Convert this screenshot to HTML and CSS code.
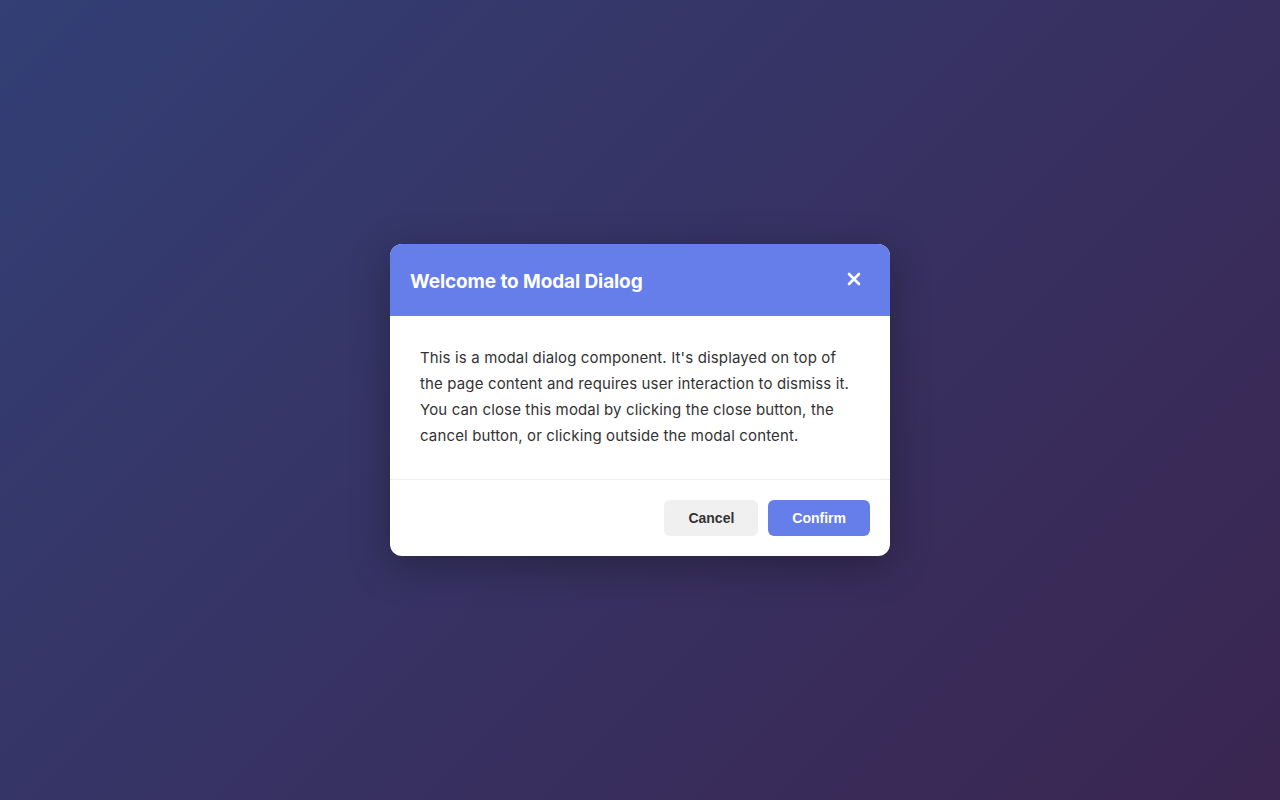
FILE: index.html
```html
<!DOCTYPE html>
<html lang="en">
<head>
<meta charset="utf-8">
<title>Modal Dialog</title>
<link rel="stylesheet" href="styles.css">
</head>
<body>
<div class="overlay">
  <div class="modal" role="dialog" aria-labelledby="modal-title">
    <div class="modal-header">
      <h2 id="modal-title" class="modal-title">Welcome to Modal Dialog</h2>
      <button class="close-btn" aria-label="Close">
        <svg width="14" height="14" viewBox="0 0 14 14" aria-hidden="true"><path d="M2 2 L12 12 M12 2 L2 12" stroke="#fff" stroke-width="2.6" stroke-linecap="round"/></svg>
      </button>
    </div>
    <div class="modal-body">
      <p>This is a modal dialog component. It's displayed on top of the page content and requires user interaction to dismiss it. You can close this modal by clicking the close button, the cancel button, or clicking outside the modal content.</p>
    </div>
    <div class="modal-footer">
      <button class="btn btn-cancel">Cancel</button>
      <button class="btn btn-confirm">Confirm</button>
    </div>
  </div>
</div>
</body>
</html>
```

FILE: styles.css
```css
* { box-sizing: border-box; }
html, body { margin: 0; height: 100%; }
body {
  font-family: Inter, "Noto Sans", "Liberation Sans", sans-serif;
  background: linear-gradient(135deg, #667eea 0%, #764ba2 100%);
}
.overlay {
  height: 100vh;
  display: flex;
  align-items: center;
  justify-content: center;
  background: rgba(0, 0, 0, 0.5);
}
.modal {
  width: 500px;
  background: #fff;
  border-radius: 12px;
  overflow: hidden;
  box-shadow: 0 10px 40px rgba(0, 0, 0, 0.3);
}
.modal-header {
  background: #667eea;
  color: #fff;
  height: 72px;
  padding: 3px 21px 0 20px;
  display: flex;
  align-items: center;
  justify-content: space-between;
}
.modal-title {
  margin: 0;
  font-size: 19px;
  font-weight: 700;
  letter-spacing: -0.1px;
}
.close-btn {
  background: none;
  border: none;
  padding: 0;
  width: 30px;
  height: 30px;
  display: flex;
  align-items: center;
  justify-content: center;
  cursor: pointer;
  margin-top: -5px;
}
.modal-body {
  padding: 29px 30px 30px;
  border-bottom: 1px solid #eee;
}
.modal-body p {
  margin: 0;
  font-size: 15px;
  line-height: 26px;
  letter-spacing: 0.14px;
  color: #333;
}
.modal-footer {
  padding: 20px;
  display: flex;
  justify-content: flex-end;
  gap: 10px;
}
.btn {
  font-family: "Liberation Sans", Arial, sans-serif;
  font-size: 14px;
  font-weight: 700;
  height: 36px;
  padding: 0 24px;
  border: none;
  border-radius: 6px;
  cursor: pointer;
}
.btn-cancel { background: #f0f0f0; color: #333; }
.btn-confirm { background: #667eea; color: #fff; }
```
